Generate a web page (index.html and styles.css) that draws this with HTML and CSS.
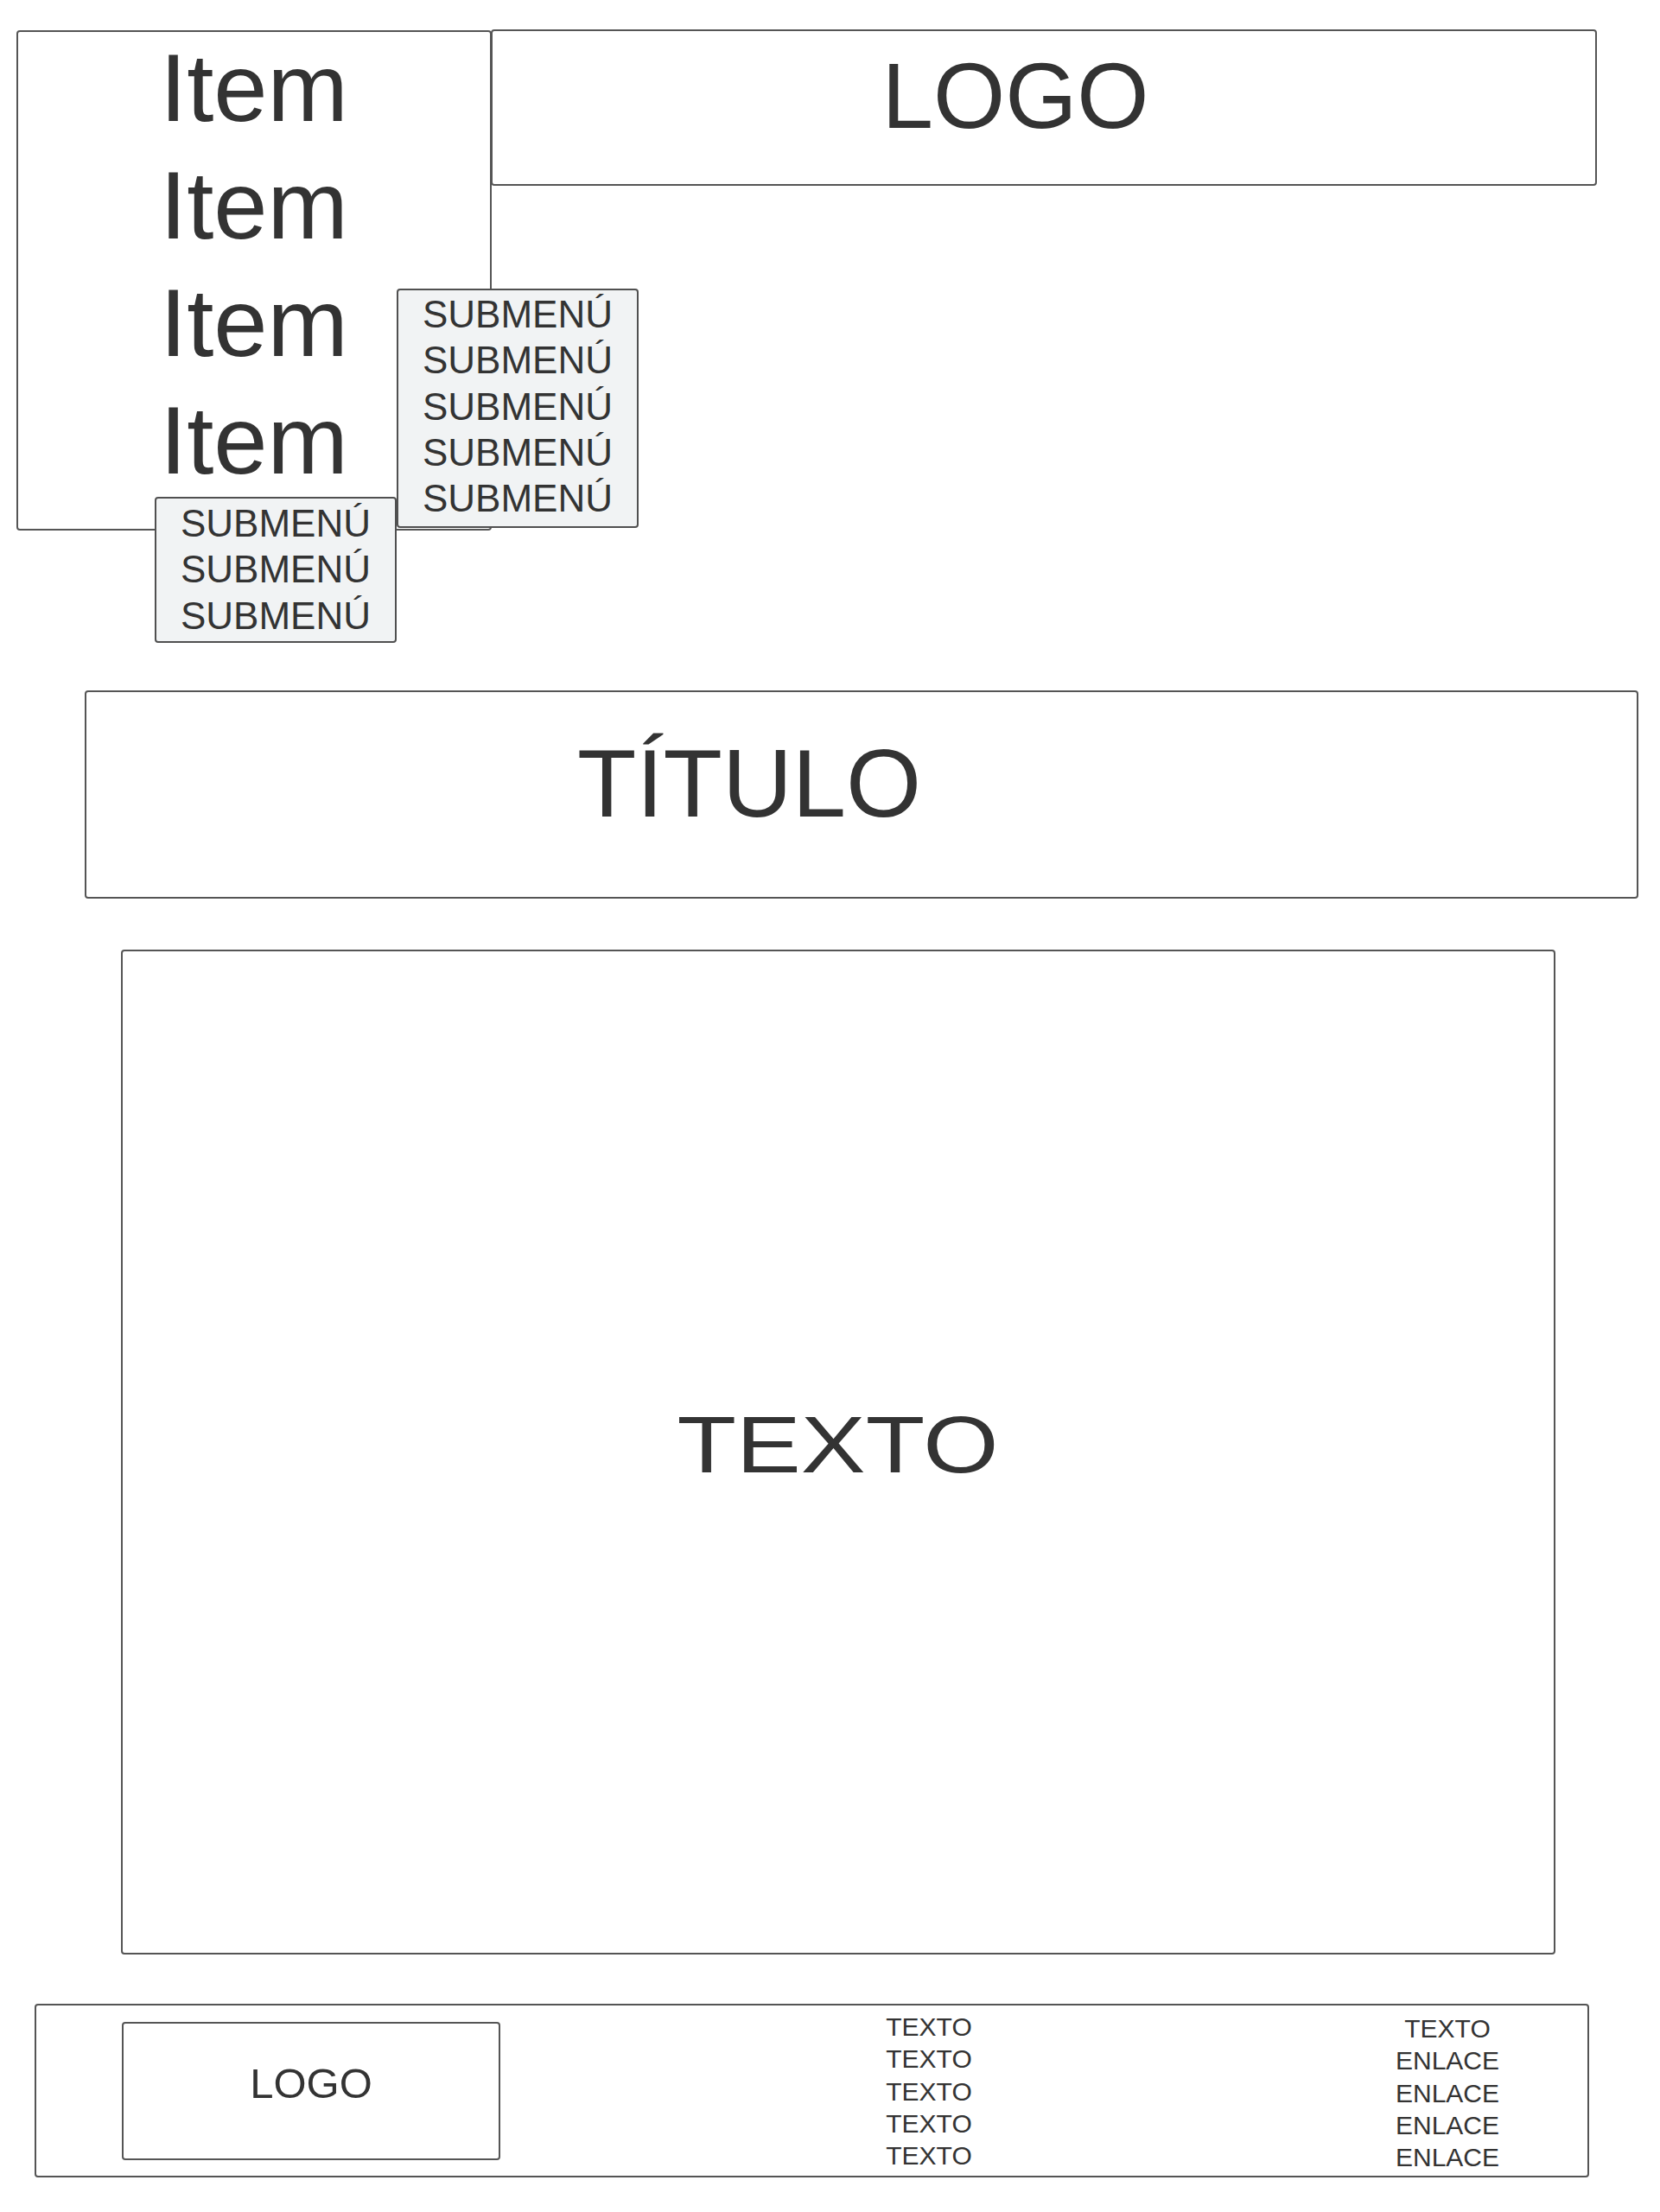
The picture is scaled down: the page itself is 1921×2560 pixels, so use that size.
FILE: index.html
```html
<!DOCTYPE html>
<html lang="es">
<head>
    <meta charset="UTF-8">
    <meta name="viewport" content="width=device-width, initial-scale=1.0">
    <title>Boceto</title>
    <link rel="stylesheet" href="styles.css">
</head>
<body>
    <div class="top">
        <nav class="menu">
            <ul class="items">
                <li>Item</li>
                <li>Item</li>
                <li>Item</li>
                <li>Item</li>
            </ul>
            <!-- submenús desplegados -->
            <div class="submenu submenu-side">
                <p>SUBMENÚ</p>
                <p>SUBMENÚ</p>
                <p>SUBMENÚ</p>
                <p>SUBMENÚ</p>
                <p>SUBMENÚ</p>
            </div>
            <div class="submenu submenu-down">
                <p>SUBMENÚ</p>
                <p>SUBMENÚ</p>
                <p>SUBMENÚ</p>
            </div>
        </nav>
        <header class="logo-bar">LOGO</header>
    </div>

    <section class="title">TÍTULO</section>

    <main class="content">
        <span class="content-text">TEXTO</span>
    </main>

    <footer class="footer">
        <div class="footer-logo">LOGO</div>
        <div class="footer-col col-text">
            <p>TEXTO</p>
            <p>TEXTO</p>
            <p>TEXTO</p>
            <p>TEXTO</p>
            <p>TEXTO</p>
        </div>
        <div class="footer-col col-links">
            <p>TEXTO</p>
            <p>ENLACE</p>
            <p>ENLACE</p>
            <p>ENLACE</p>
            <p>ENLACE</p>
        </div>
    </footer>
</body>
</html>
```

FILE: styles.css
```css
body {
    font-family: "Liberation Sans", Arial, sans-serif;
    background-color: #fff;
    color: #333;
    margin: 0;
    padding: 0;
}
p {
    margin: 0;
}
.top {
    display: flex;
    align-items: flex-start;
    padding: 34px 0 0 19px;
}
.menu {
    position: relative;
    box-sizing: border-box;
    width: 550px;
    height: 579px;
    margin-top: 1px;
    border: 2px solid #555;
    border-radius: 4px;
}
.items {
    list-style: none;
    margin: -3px 0 0;
    padding: 0;
    text-align: center;
    font-size: 112px;
    line-height: 136px;
}
.submenu {
    position: absolute;
    box-sizing: border-box;
    width: 280px;
    background-color: #f1f3f4;
    border: 2px solid #505050;
    border-radius: 4px;
    text-align: center;
    font-size: 44px;
    line-height: 53.3px;
}
.submenu-side {
    left: 438px;
    top: 297px;
    padding: 1px 0 6px;
}
.submenu-down {
    left: 158px;
    top: 538px;
    padding: 2px 0 3px;
}
.logo-bar {
    box-sizing: border-box;
    width: 1280px;
    height: 181px;
    margin-left: -1px;
    padding: 22px 66px 0 0;
    border: 2px solid #555;
    border-radius: 4px;
    text-align: center;
    font-size: 107px;
    line-height: 107px;
}
.title {
    box-sizing: border-box;
    width: 1798px;
    height: 241px;
    margin: 185px 0 0 98px;
    padding: 50px 0 0 568px;
    border: 2px solid #555;
    border-radius: 4px;
    font-size: 112px;
    line-height: 112px;
}
.content {
    box-sizing: border-box;
    display: flex;
    align-items: center;
    justify-content: center;
    width: 1660px;
    height: 1163px;
    margin: 59px 0 0 140px;
    padding-bottom: 18px;
    border: 2px solid #555;
    border-radius: 4px;
}
.content-text {
    display: inline-block;
    font-size: 92px;
    line-height: 92px;
    transform: scaleX(1.22);
}
.footer {
    box-sizing: border-box;
    display: flex;
    align-items: flex-start;
    width: 1799px;
    height: 201px;
    margin: 57px 0 0 40px;
    padding-left: 99px;
    border: 2px solid #555;
    border-radius: 4px;
}
.footer-logo {
    box-sizing: border-box;
    display: flex;
    align-items: center;
    justify-content: center;
    width: 438px;
    height: 160px;
    margin-top: 19px;
    padding-bottom: 18px;
    border: 2px solid #555;
    border-radius: 4px;
    font-size: 49px;
    line-height: 49px;
}
.footer-col {
    width: 200px;
    text-align: center;
    font-size: 30px;
    line-height: 37.3px;
}
.col-text {
    margin: 6px 0 0 396px;
}
.col-links {
    margin: 8px 0 0 400px;
}
```
